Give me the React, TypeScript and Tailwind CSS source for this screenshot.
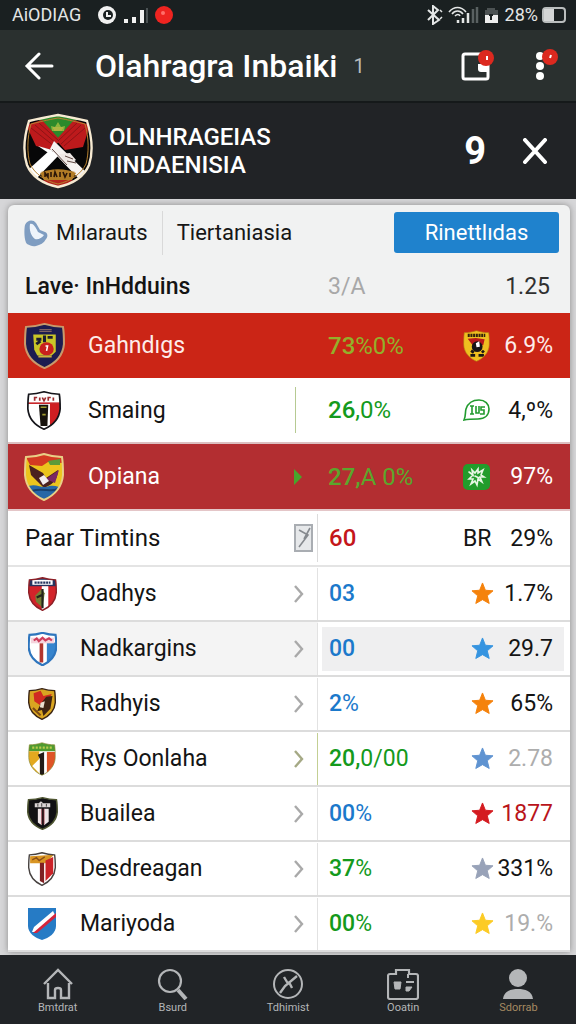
import type { ReactNode } from 'react'
import clsx from 'clsx'

const SHIELD = 'M20 1 C26 3 32 4 38 4 C39 10 39 16 39 22 C38 34 31 42 20 47 C9 42 2 34 1 22 C1 16 1 10 2 4 C8 4 14 3 20 1 Z'

function Shield({
  id,
  className,
  fill,
  edge,
  edgeWidth = 2,
  children,
}: {
  id: string
  className: string
  fill: string
  edge: string
  edgeWidth?: number
  children?: ReactNode
}) {
  return (
    <svg viewBox="0 0 40 48" preserveAspectRatio="none" className={className} aria-hidden="true">
      <clipPath id={id}>
        <path d={SHIELD} />
      </clipPath>
      <g clipPath={`url(#${id})`}>
        <rect width="40" height="48" fill={fill} />
        {children}
      </g>
      <path d={SHIELD} fill="none" stroke={edge} strokeWidth={edgeWidth} />
    </svg>
  )
}

function TeamCrest() {
  const outline =
    'M35 2 C46 4 56 6 64 8 C69 24 70 40 66 52 C61 64 49 71 35 74 C21 71 9 64 4 52 C0 40 1 24 6 8 C14 6 24 4 35 2 Z'
  return (
    <svg viewBox="0 0 70 76" className="h-[76px] w-[70px] shrink-0" aria-hidden="true">
      <clipPath id="team">
        <path d={outline} />
      </clipPath>
      <g clipPath="url(#team)">
        <rect width="70" height="76" fill="#070708" />
        <path d="M13 3 H57 L36 30 H33 Z" fill="#2c8a2b" />
        <path d="M3 12 L19 7 L37 27 L29 37 L13 33 Z" fill="#bd1a1c" />
        <path d="M67 12 L51 7 L33 27 L42 37 L60 34 Z" fill="#bd1a1c" />
        <path
          d="M8 15 L31 33 M12 12 L34 31 M16 10 L36 28 M62 15 L41 33 M58 12 L38 31 M54 10 L36 27"
          stroke="#8e1416"
          strokeWidth="1"
        />
        <path d="M29 18 H41 L42 13 L38 14 L35 9 L32 14 L28 13 Z" fill="#8db53c" />
        <path d="M30 15 H40 M31 17 H39" stroke="#d0b84a" strokeWidth="1" />
        <path d="M27 36 L31 28 L64 60 L57 67 L33 42 Z" fill="#f6f2f0" />
        <path d="M15 33 L29 37 L27 41 Z" fill="#fff" />
        <path d="M5 57 L27 37 L36 42 L13 66 Z" fill="#fff" />
        <path d="M36 41 L45 52 L53 47 L47 40 Z" fill="#efe8e5" />
        <path d="M29 36 L44 52 M42 43 L50 46 M44 48 L53 50" stroke="#5d4640" strokeWidth="1" />
        <path d="M17 60 C27 55 43 55 53 60 L49 67 H21 Z" fill="#b27c26" />
        <path
          d="M22 64 V60 L25 64 V60 M28 64 V59 M31 64 L32 59 L34 64 M37 59 V64 M40 59 L42 64 L44 60 M47 60 V64"
          stroke="#2c1708"
          strokeWidth="1.6"
          fill="none"
        />
        <path d="M12 70 L22 67 H48 L58 70 L35 76 Z" fill="#b4231d" />
      </g>
      <path d={outline} fill="none" stroke="#f7ead2" strokeWidth="2.4" />
      <path
        d="M35 5 C46 7 54 9 62 11 C66 25 66 40 63 51 C58 61 48 68 35 71 C22 68 12 61 7 51 C4 40 4 25 8 11 C16 9 24 7 35 5 Z"
        fill="none"
        stroke="#b5802f"
        strokeWidth="1"
      />
    </svg>
  )
}

const crests = {
  navy: (
    <Shield id="navy" className="h-[46px] w-[41px]" fill="#1c1c50" edge="#c79a6c">
      <path d="M15 7 H27 M15 9 H27" stroke="#a07a68" strokeWidth="1" />
      <path d="M9 12 H31 V30 L27 34 H13 L10 28 Z" fill="#c9c528" />
      <path d="M12 17 H17 M23 15 H28 M12 22 L16 19 M20 13 V20" stroke="#1c1c30" strokeWidth="3" />
      <circle cx="22" cy="27" r="7" fill="#c8201d" />
      <path d="M21 24 H23 L22 29" stroke="#fff" strokeWidth="1.5" fill="none" />
      <path d="M14 35 H27" stroke="#d0b23c" strokeWidth="2" />
    </Shield>
  ),
  black: (
    <Shield id="blackwhite" className="h-[39px] w-[34px]" fill="#fff" edge="#15151a">
      <rect x="27" y="15" width="12" height="32" fill="#cf1e22" />
      <rect y="14" width="40" height="2" fill="#c8262a" />
      <path d="M9 12 V8 H12 M15 12 V8 M18 8 L20 12 L22 8 M25 12 V8 H28 M31 8 V12" stroke="#9c2b2e" strokeWidth="2" fill="none" />
      <path d="M14 17 H25 L24 43 H16 Z" fill="#17130e" />
      <path d="M16 20 H23 M18 29 H22" stroke="#a29b2f" strokeWidth="2" />
    </Shield>
  ),
  eagle: (
    <Shield id="eagle" className="h-[48px] w-[40px]" fill="#ecc51d" edge="#e9cf86">
      <path d="M2 4 L20 1 L38 5 V10 L24 9 L18 13 L6 12 Z" fill="#d43a22" />
      <path d="M24 8 L36 6 V12 L26 12 Z" fill="#5a9a39" />
      <path d="M5 12 L19 20 L22 25 L34 17 C34 28 27 32 20 35 L14 29 L7 22 Z" fill="#4a211f" />
      <path d="M22 26 L35 17 L31 30 Z" fill="#7b2863" />
      <path d="M15 25 L20 22 L25 28 L19 32 Z" fill="#f3eef0" />
      <path d="M1 35 C10 29 16 35 22 34 C30 31 35 34 40 36 V48 H1 Z" fill="#2767a6" />
      <path d="M8 38 C18 34 28 40 33 36" stroke="#18406c" strokeWidth="2" fill="none" />
    </Shield>
  ),
  guard: (
    <Shield id="guard" className="h-[34px] w-[29px]" fill="#d3232a" edge="#8d2027">
      <rect width="40" height="13" fill="#26345f" />
      <rect x="6" y="4" width="28" height="7" fill="#fff" />
      <path d="M9 8 H31" stroke="#26345f" strokeWidth="3" strokeDasharray="3 1" />
      <rect x="19" y="13" width="9" height="34" fill="#fff" />
      <path d="M10 26 L19 17 L23 23 L20 43 L11 35 Z" fill="#777e35" />
      <path d="M20 17 V44 M12 29 L20 25" stroke="#24241d" strokeWidth="3" />
    </Shield>
  ),
  blue: (
    <Shield id="blue" className="h-[34px] w-[29px]" fill="#fff" edge="#2e75bd" edgeWidth={3}>
      <rect x="26" y="15" width="14" height="33" fill="#3684cd" />
      <rect x="4" y="8" width="32" height="8" fill="#f5d4dd" />
      <path d="M8 12 L12 9 L15 13 L20 8 L24 12 L29 9 L33 12" stroke="#ce3d5c" strokeWidth="3" fill="none" />
      <rect x="16" y="16" width="5" height="27" fill="#b2352e" />
    </Shield>
  ),
  gold: (
    <Shield id="gold" className="h-[32px] w-[28px]" fill="#d9a521" edge="#3a2415">
      <path d="M8 8 L18 4 L22 12 L34 9 L28 21 L19 27 L9 20 Z" fill="#d02b22" />
      <path d="M26 13 L35 12 L32 31 L22 42 L20 33 L13 35 L18 24 Z" fill="#3d2314" />
      <path d="M18 22 L24 20 L22 30 L17 29 Z" fill="#eadfd0" />
      <path d="M7 30 L18 41" stroke="#7c4915" strokeWidth="3" />
    </Shield>
  ),
  green: (
    <Shield id="green" className="h-[34px] w-[28px]" fill="#fff" edge="#8c8a35" edgeWidth={1}>
      <rect width="40" height="13" fill="#4e9b30" />
      <path d="M6 8 H34" stroke="#bacb4d" strokeWidth="3" strokeDasharray="3 2" />
      <path d="M0 13 H16 V48 H0 Z" fill="#e3a920" />
      <path d="M14 18 L23 14 V48 H17 V24 Z" fill="#231b17" />
      <rect x="27" y="14" width="13" height="34" fill="#df5427" />
      <path d="M6 34 L16 24 V44 Z" fill="#fff" />
    </Shield>
  ),
  dark: (
    <Shield id="dark" className="h-[33px] w-[31px]" fill="#111113" edge="#4f5632">
      <path d="M10 15 V9 H15 L18 6 L21 9 H30 V15 Z" fill="#dad5d5" />
      <path d="M14 10 V14 M19 9 V14 M25 10 V14" stroke="#111" strokeWidth="1" />
      <path d="M14 17 H19 V41 L14 37 Z M22 17 H28 V36 L22 41 Z" fill="#eee5e6" />
      <path d="M19 17 V40 M22 17 V40" stroke="#9b3440" strokeWidth="1" />
    </Shield>
  ),
  red: (
    <Shield id="red" className="h-[34px] w-[28px]" fill="#fff" edge="#46413f">
      <path d="M3 6 L37 4 L25 16 H3 Z" fill="#d99523" />
      <path d="M6 11 L12 8 L16 12 L24 7" stroke="#8c4f18" strokeWidth="2" fill="none" />
      <path d="M17 15 H23 V44 L17 41 Z" fill="#7e2023" />
      <path d="M25 12 L36 7 V30 L25 41 Z" fill="#cb2228" />
    </Shield>
  ),
  sash: (
    <svg viewBox="0 0 28 32" className="h-[32px] w-[28px]" aria-hidden="true">
      <path d="M0 0 H28 V18 C28 25 21 30 14 32 C7 30 0 25 0 18 Z" fill="#267bc5" />
      <path d="M25 3 L27 7 L9 24 L4 24 L6 19 Z" fill="#fff" />
      <path d="M28 5 V9 L9 25 L5 25 Z" fill="#d4253c" />
    </svg>
  ),
}

function Star({ className }: { className: string }) {
  return (
    <svg viewBox="0 0 24 24" className={clsx('ml-2 size-[23px]', className)} fill="currentColor" aria-hidden="true">
      <path
        d="M12 1 L15 8.6 L23 9.2 L17 14.4 L19 22.4 L12 18.4 L5 22.4 L7 14.4 L1 9.2 L9 8.6 Z"
        stroke="currentColor"
        strokeWidth="1"
        strokeLinejoin="round"
      />
    </svg>
  )
}

const badges = {
  yellow: (
    <Shield id="yellow" className="h-[32px] w-[27px]" fill="#efbf20" edge="#b98917" edgeWidth={1}>
      <path d="M7 8 H33" stroke="#33220c" strokeWidth="5" strokeDasharray="3 1" />
      <path d="M7 13 L19 12 L32 14 L30 23 L20 21 L16 25 Z" fill="#b81919" />
      <circle cx="21" cy="25" r="8" fill="#191516" />
      <path d="M19 20 L24 17 L25 25 L20 26 Z" fill="#fff" />
      <path d="M11 38 H18 M23 38 H31 M16 34 L12 31 M28 34 L31 31" stroke="#191516" strokeWidth="4" />
    </Shield>
  ),
  bubble: (
    <svg viewBox="0 0 27 22" className="h-[22px] w-[27px]" fill="none" stroke="#219b2e" aria-hidden="true">
      <path
        d="M1 21 C3 17 2 13 3 10 C5 4 10 1 16 1 C22 1 26 5 26 10 C26 16 22 20 15 20 C10 20 6 20 1 21 Z"
        strokeWidth="1.6"
      />
      <path d="M7 7 H11 M9 7 V15 M7 15 H11 M13 7 V14 H16 V7 M22 8 H18 V11 H21 V15 H17" strokeWidth="1.6" />
    </svg>
  ),
  leaf: (
    <svg viewBox="0 0 27 26" className="h-[26px] w-[27px]" aria-hidden="true">
      <rect width="27" height="26" rx="5" fill="#229c2b" />
      <path
        d="M6 8 L10 11 L9 6 L12 9 L15 5 L15 9 L20 6 L18 11 L21 13 L17 13 L19 18 L15 15 L14 21 L12 17 L8 20 L10 15 L6 15 L9 12 M12 12 L16 14"
        fill="none"
        stroke="#e7f7e4"
        strokeWidth="1.6"
        strokeLinecap="round"
      />
    </svg>
  ),
  br: <span className="text-[#141414]">BR</span>,
  orange: <Star className="text-[#f5820b]" />,
  sky: <Star className="text-[#3694e0]" />,
  steel: <Star className="text-[#5f93d1]" />,
  crimson: <Star className="text-[#d41b20]" />,
  slate: <Star className="text-[#98a2b8]" />,
  amber: <Star className="text-[#fccb25]" />,
}

function Chevron({ className = 'text-[#a9a9a9]' }: { className?: string }) {
  return (
    <svg viewBox="0 0 10 18" className={clsx('h-[18px] w-[10px]', className)} fill="none" aria-hidden="true">
      <path d="M1 1 L8 9 L1 17" stroke="currentColor" strokeWidth="2.4" />
    </svg>
  )
}

type Club = {
  name: string
  crest: keyof typeof crests
  lead: string
  rest?: string
  tone: string
  badge: keyof typeof badges
  rate: string
  rateTone?: string
  marked?: boolean
  olive?: boolean
}

const clubs: Club[] = [
  { name: 'Oadhys', crest: 'guard', lead: '03', tone: 'text-[#1b79cb]', badge: 'orange', rate: '1.7%' },
  { name: 'Nadkargins', crest: 'blue', lead: '00', tone: 'text-[#1b79cb]', badge: 'sky', rate: '29.7', marked: true },
  { name: 'Radhyis', crest: 'gold', lead: '2', rest: '%', tone: 'text-[#1b79cb]', badge: 'orange', rate: '65%' },
  {
    name: 'Rys Oonlaha',
    crest: 'green',
    lead: '20,',
    rest: '0/00',
    tone: 'text-[#149a1c]',
    badge: 'steel',
    rate: '2.78',
    rateTone: 'text-[#adadad]',
    olive: true,
  },
  {
    name: 'Buailea',
    crest: 'dark',
    lead: '00',
    rest: '%',
    tone: 'text-[#1b79cb]',
    badge: 'crimson',
    rate: '1877',
    rateTone: 'text-[#b9141a]',
  },
  { name: 'Desdreagan', crest: 'red', lead: '37', rest: '%', tone: 'text-[#149a1c]', badge: 'slate', rate: '331%' },
  {
    name: 'Mariyoda',
    crest: 'sash',
    lead: '00',
    rest: '%',
    tone: 'text-[#149a1c]',
    badge: 'amber',
    rate: '19.%',
    rateTone: 'text-[#adadad]',
  },
]

function StatusBar() {
  return (
    <div className="flex h-[30px] items-center bg-[#1a2021] px-3 pr-[10px] text-lg leading-none text-[#e4e6e6]">
      <span>AiODIAG</span>
      <svg viewBox="0 0 76 20" className="ml-4 h-5 w-[76px]" aria-hidden="true">
        <circle cx="10" cy="10" r="9" fill="#f1f1f1" />
        <circle cx="11" cy="10" r="5" fill="#1a2021" />
        <path d="M10 7 V11 H14" stroke="#f1f1f1" strokeWidth="2" fill="none" />
        <path d="M27 14 h4 v4 h-4 Z M35 12 h4 v6 h-4 Z M43 5 h4 v13 h-4 Z" fill="#f1f1f1" />
        <path d="M49 3 h2 v15 h-2 Z" fill="#4a5153" />
        <circle cx="67" cy="10" r="9" fill="#ee2420" />
        <circle cx="66" cy="8" r="2" fill="#ff6f69" />
      </svg>
      <svg viewBox="0 0 76 20" className="ml-auto h-5 w-[76px]" fill="none" stroke="#e4e6e6" aria-hidden="true">
        <path d="M3 5 L14 15 L8 19 V1 L13 5 L3 15" strokeWidth="2" />
        <path d="M15 5 L17 7 M15 14 L17 12" strokeWidth="1.5" />
        <path d="M24 7 C29 1 36 1 41 7 M27 9 C30 5 35 5 38 9 M30 11 C32 9 34 9 35 11" strokeWidth="1.6" />
        <path d="M33 18 V15 M38 18 V13 M43 18 V8" strokeWidth="2.5" />
        <path d="M48 18 V4 M52 18 V2" stroke="#596061" strokeWidth="2.5" />
        <path d="M62 3 H70 V5 H73 V18 H60 V5 H62 Z" fill="#4c5253" stroke="none" />
        <path d="M60 10 H73 V18 H60 Z" fill="#eee" stroke="none" />
        <path d="M66 9 V15 M64 10 H68" stroke="#1a2021" strokeWidth="2" />
      </svg>
      <span className="ml-1">28%</span>
      <span className="ml-1 flex h-4 w-6 rounded-[4px] border-2 border-[#b9bdbd]">
        <span className="w-[10px] bg-[#d4d6d6]" />
      </span>
    </div>
  )
}

function AppBar() {
  return (
    <header className="flex h-[73px] items-center border-b-2 border-[#15191a] bg-[#2a302f] pr-[17px] pl-6 text-white">
      <button type="button" aria-label="Back">
        <svg viewBox="0 0 30 28" className="h-7 w-[30px]" fill="none" stroke="currentColor" strokeWidth="3" aria-hidden="true">
          <path d="M28 14 H4 M15 2 L3 14 L15 26" strokeLinecap="round" />
        </svg>
      </button>
      <h1 className="ml-[41px] text-[32px] leading-none font-medium whitespace-nowrap">Olahragra Inbaiki</h1>
      <span className="ml-4 text-xl text-[#b9bcbc]">1</span>
      <button type="button" aria-label="Notes" className="ml-auto">
        <svg viewBox="0 0 34 34" className="h-[34px] w-[34px]" aria-hidden="true">
          <rect x="2" y="5" width="25" height="25" rx="2" fill="none" stroke="#fff" strokeWidth="3" />
          <path d="M17 15 H28 V23 H20 Q17 23 17 20 Z" fill="#fff" />
          <circle cx="25" cy="9" r="8" fill="#dc291f" />
          <path d="M26 7 V11" stroke="#fff" strokeWidth="2" />
        </svg>
      </button>
      <button type="button" aria-label="More options" className="ml-10">
        <svg viewBox="0 0 24 34" className="h-[34px] w-6" aria-hidden="true">
          <g fill="#fff">
            <circle cx="5" cy="7" r="4" />
            <circle cx="5" cy="17" r="4" />
            <circle cx="5" cy="27" r="4" />
          </g>
          <circle cx="15" cy="8" r="8" fill="#dc291f" />
          <path d="M16 6 L15 9" stroke="#fff" strokeWidth="2" />
        </svg>
      </button>
    </header>
  )
}

function TeamBar() {
  return (
    <section className="flex h-[96px] items-center bg-[#212326] pr-7 pl-[23px] text-white">
      <TeamCrest />
      <h2 className="ml-4 text-2xl leading-7 font-medium">
        OLNHRAGEIAS
        <br />
        IINDAENISIA
      </h2>
      <span className="ml-auto text-[38px] leading-none font-bold">9</span>
      <button type="button" aria-label="Close" className="ml-9">
        <svg viewBox="0 0 26 26" className="size-[26px]" fill="none" stroke="currentColor" strokeWidth="4" aria-hidden="true">
          <path d="M3 2 L23 24 M23 2 L3 24" strokeLinecap="round" />
        </svg>
      </button>
    </section>
  )
}

function Tabs() {
  return (
    <div className="flex h-[55px] items-center pr-[11px] pl-4 text-[22px] text-[#161616]">
      <button type="button" className="flex items-center gap-2">
        <svg viewBox="0 0 24 28" className="h-7 w-6" aria-hidden="true">
          <path
            d="M1 6 C3 1 9 0 12 4 L16 11 L21 13 C24 14 24 18 22 20 C20 24 16 26 12 27 C8 28 6 26 3 25 C0 22 0 10 1 6 Z"
            fill="#7f9dc1"
          />
          <path d="M6 5 C9 4 11 7 14 13 L20 16 C18 19 14 21 11 20 C7 17 5 11 6 5 Z" fill="#eef4fb" />
        </svg>
        Mılarauts
      </button>
      <span className="ml-[14px] h-11 w-px bg-[#d9d9d9]" />
      <button type="button" className="ml-[14px]">
        Tiertaniasia
      </button>
      <button type="button" className="ml-auto h-[41px] w-[165px] rounded-[3px] bg-[#1f82cd] text-white">
        Rinettlıdas
      </button>
    </div>
  )
}

function TopRow({
  name,
  crest,
  marker,
  lead,
  rest,
  badge,
  rate,
  className,
  tone,
}: {
  name: string
  crest: keyof typeof crests
  marker?: ReactNode
  lead: string
  rest: string
  badge: keyof typeof badges
  rate: string
  className: string
  tone: string
}) {
  return (
    <tr className={className}>
      <td>
        <span className="flex justify-center">{crests[crest]}</span>
      </td>
      <th scope="row" className="pl-2 text-left font-normal">
        {name}
      </th>
      <td>{marker}</td>
      <td className={clsx('pl-[10px] text-2xl', tone)}>
        <b className="font-medium">{lead}</b>
        {rest}
      </td>
      <td>{badges[badge]}</td>
      <td className="pr-[17px] text-right">{rate}</td>
    </tr>
  )
}

function ClubRow({ club }: { club: Club }) {
  return (
    <tr className="h-[55px] border-b-2 border-[#dcdcdc] bg-white">
      <td className={clsx(club.marked && 'bg-[#f3f3f3]')}>
        <span className="flex justify-center pr-1">{crests[club.crest]}</span>
      </td>
      <th scope="row" className={clsx('text-left font-normal', club.marked && 'bg-[#f4f4f4]')}>
        {club.name}
      </th>
      <td className={clsx(club.marked && 'bg-[#f4f4f4]')}>
        <span
          className={clsx(
            'flex h-[52px] items-center border-r pl-[6px]',
            club.olive ? 'border-[#c3cf93]' : 'border-[#e2e2e2]',
          )}
        >
          <Chevron className={club.olive ? 'text-[#a5a985]' : undefined} />
        </span>
      </td>
      <td colSpan={3} className={clsx(club.marked && 'py-1 pr-[6px] pl-1')}>
        <div className={clsx('flex items-center', club.marked ? 'h-[44px] bg-[#efeff0] pr-[11px] pl-[7px]' : 'pr-[17px] pl-[11px]')}>
          <span className={clsx('flex-1', club.tone)}>
            <b className="font-medium">{club.lead}</b>
            {club.rest}
          </span>
          <span className="w-[34px]">{badges[club.badge]}</span>
          <span className={clsx('w-14 text-right', club.rateTone)}>{club.rate}</span>
        </div>
      </td>
    </tr>
  )
}

function Standings() {
  return (
    <table className="w-full table-fixed border-collapse text-[23px] leading-none whitespace-nowrap text-[#141414]">
      <colgroup>
        <col className="w-[72px]" />
        <col />
        <col className="w-[30px]" />
        <col className="w-[145px]" />
        <col className="w-[40px]" />
        <col className="w-[67px]" />
      </colgroup>
      <thead>
        <tr className="h-[53px]">
          <th scope="col" colSpan={3} className="pl-[17px] text-left font-medium">
            Lave· InHdduins
          </th>
          <th scope="col" className="pl-[10px] text-left font-normal text-[#a8a8a8]">
            3/A
          </th>
          <th scope="col" colSpan={2} className="pr-5 text-right font-normal text-[#303030]">
            1.25
          </th>
        </tr>
      </thead>
      <tbody>
        <TopRow
          name="Gahndıgs"
          crest="navy"
          lead="73"
          rest="%0%"
          badge="yellow"
          rate="6.9%"
          className="h-[65px] bg-[#cb2516] text-[#fdecea]"
          tone="text-[#93b02a]"
        />
        <TopRow
          name="Smaing"
          crest="black"
          marker={<span className="ml-[7px] block h-[46px] w-px bg-[#b6ca92]" />}
          lead="26"
          rest=",0%"
          badge="bubble"
          rate="4,º%"
          className="h-[65px] border-b-2 border-[#dcbfc0] bg-white"
          tone="text-[#149a1c]"
        />
        <TopRow
          name="Opiana"
          crest="eagle"
          marker={
            <svg viewBox="0 0 8 16" className="ml-[6px] h-4 w-2" aria-hidden="true">
              <path d="M0 0 L8 8 L0 16 Z" fill="#47a62c" />
            </svg>
          }
          lead="27,"
          rest="A 0%"
          badge="leaf"
          rate="97%"
          className="h-[67px] border-b-2 border-[#e4c6c8] bg-[#b32e31] text-white"
          tone="text-[#5ba62c]"
        />
        <tr className="h-[56px] border-b-2 border-[#e4e4e4] bg-white">
          <th scope="row" colSpan={2} className="pl-[17px] text-left text-2xl leading-none font-normal">
            Paar Timtins
          </th>
          <td>
            <span className="flex h-12 items-center border-r border-[#dcdcdc] pl-[6px]">
              <svg viewBox="0 0 19 28" className="h-7 w-[19px]" fill="none" aria-hidden="true">
                <rect x="1" y="1" width="17" height="26" fill="#e6e8ea" stroke="#a9adb2" strokeWidth="2" />
                <path d="M5 6 L14 11 L5 23 M16 4 L10 15" stroke="#85898e" strokeWidth="1.6" />
              </svg>
            </span>
          </td>
          <td className="pl-[11px] text-2xl font-medium text-[#c4161a]">60</td>
          <td>{badges.br}</td>
          <td className="pr-[17px] text-right">29%</td>
        </tr>
        {clubs.map((club) => (
          <ClubRow key={club.name} club={club} />
        ))}
      </tbody>
    </table>
  )
}

const navItems = [
  {
    label: 'Bmtdrat',
    icon: (
      <path d="M2 16 L16 2 L30 16 M6 15 V30 H13 V22 Q13 20 16 20 Q19 20 19 22 V30 H27 V15" strokeWidth="2.4" />
    ),
  },
  {
    label: 'Bsurd',
    icon: (
      <>
        <circle cx="13" cy="13" r="11" strokeWidth="2.2" />
        <path d="M21 22 L29 31" strokeWidth="4" />
      </>
    ),
  },
  {
    label: 'Tdhimist',
    icon: (
      <>
        <circle cx="16" cy="16" r="14" strokeWidth="2" />
        <path d="M8 25 L13 18 L25 8 M12 9 L15 14 L18 16 L20 20" strokeWidth="2.4" />
      </>
    ),
  },
  {
    label: 'Ooatin',
    icon: (
      <>
        <path d="M9 6 V2 H22 V6 H29 Q31 6 31 8 V29 Q31 31 29 31 H3 Q1 31 1 29 V8 Q1 6 3 6 Z" strokeWidth="2.2" />
        <path d="M7 14 H14 L13 21 H8 Z M19 19 H25 L22 23 H19 Z" fill="currentColor" strokeWidth="1" />
        <path d="M19 14 H27 M21 6 V10" strokeWidth="2" />
      </>
    ),
  },
  {
    label: 'Sdorrab',
    active: true,
    icon: (
      <>
        <circle cx="16" cy="10" r="9" fill="currentColor" />
        <path d="M1 31 C2 23 9 21 16 21 C23 21 30 23 31 31 Z" fill="currentColor" />
      </>
    ),
  },
]

function BottomNav() {
  return (
    <nav className="sticky bottom-0 grid h-[70px] grid-cols-5 bg-[#212427] text-[#b4b6b8]">
      {navItems.map((item) => (
        <a key={item.label} href="#" className="flex flex-col items-center pt-[13px]">
          <svg viewBox="0 0 32 32" className="size-8" fill="none" stroke="currentColor" strokeWidth="0" aria-hidden="true">
            {item.icon}
          </svg>
          <span className={clsx('mt-[2px] text-[11px] leading-3', item.active && 'text-[#a58a62]')}>{item.label}</span>
        </a>
      ))}
    </nav>
  )
}

export default function App() {
  return (
    <div className="flex min-h-screen flex-col bg-[#d6d6d8] font-['Roboto',sans-serif]">
      <StatusBar />
      <AppBar />
      <TeamBar />
      <main className="flex-1 pt-[6px] pr-[6px] pb-[3px] pl-2">
        <div className="overflow-hidden rounded-t-md bg-[#f1f2f2] shadow-[0_0_6px_#8c8c8c]">
          <Tabs />
          <Standings />
        </div>
      </main>
      <BottomNav />
    </div>
  )
}
